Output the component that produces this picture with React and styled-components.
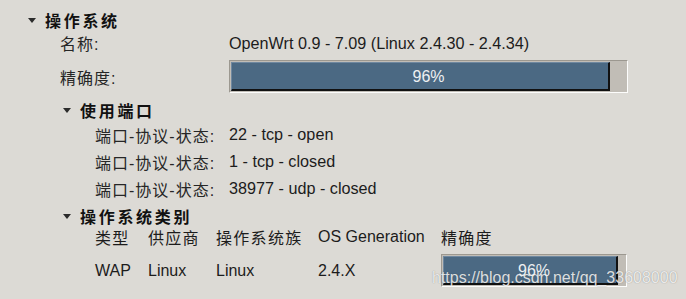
import React from 'react';
import styled, { createGlobalStyle } from 'styled-components';

const GlobalStyle = createGlobalStyle`
  html, body {
    margin: 0;
    padding: 0;
    background: #dcdad5;
  }
  body {
    font-family: "Liberation Sans", "Noto Sans CJK SC", sans-serif;
    font-size: 16px;
    color: #1c1c1c;
  }
`;

const Page = styled.div`
  position: relative;
  width: 686px;
  height: 299px;
  overflow: hidden;
  box-sizing: border-box;
  padding: 9px 0 0 25px;
`;

const Expander = styled.div`
  display: flex;
  align-items: center;
  height: 22px;
  margin-left: 3px;
  margin-top: ${p => p.$top || 0}px;
  font-weight: bold;
  letter-spacing: 2.7px;
  color: #111;
`;

const Arrow = styled.span`
  width: 0;
  height: 0;
  border-left: 4px solid transparent;
  border-right: 4px solid transparent;
  border-top: 5px solid #2b2b2b;
  margin-right: 9px;
`;

const Body = styled.div`
  padding-left: 35px;
`;

const InfoGrid = styled.div`
  display: grid;
  grid-template-columns: ${p => p.$label}px auto;
  grid-auto-rows: ${p => p.$row}px;
  align-items: center;
  margin-top: ${p => p.$top || 0}px;
`;

const Label = styled.div`
  color: #262626;
  letter-spacing: 1px;
`;

const Value = styled.div`
  color: #1c1c1c;
  font-size: 16.2px;
  white-space: nowrap;
`;

const Table = styled.div`
  display: grid;
  grid-template-columns: 53px 68px 102px 123px 186px;
  grid-template-rows: 20px 33px;
  row-gap: 7px;
  align-items: center;
`;

const Cell = styled.div`
  white-space: nowrap;
  letter-spacing: ${p => (p.$cjk ? 1.3 : 0)}px;
`;

const Trough = styled.div`
  display: grid;
  width: ${p => p.$width}px;
  height: 33px;
  box-sizing: border-box;
  padding: 1px;
  border: 1px solid;
  border-color: #9c9890 #fdfdfc #fdfdfc #9c9890;
  background: #c1bdb6;
`;

const Fill = styled.div`
  grid-area: 1 / 1;
  justify-self: start;
  box-sizing: border-box;
  height: 100%;
  background: #4b6983;
  border-top: 1px solid #6f88a0;
  border-left: 1px solid #6f88a0;
  border-right: 2px solid #111;
  border-bottom: 2px solid #111;
`;

const BarText = styled.div`
  grid-area: 1 / 1;
  justify-self: center;
  align-self: center;
  color: #eef0f2;
  font-size: 16px;
  z-index: 1;
`;

const Watermark = styled.div`
  position: absolute;
  left: 432px;
  top: 269px;
  font-family: "Liberation Sans", sans-serif;
  font-size: 16px;
  color: rgba(255, 255, 255, 0.82);
  text-shadow: 0 0 1px rgba(60, 60, 60, 0.55);
  white-space: nowrap;
`;

function Progress({ width, value }) {
  return (
    <Trough $width={width}>
      <Fill style={{ width: `${value}%` }} />
      <BarText>{value}%</BarText>
    </Trough>
  );
}

function Section({ title, top, children }) {
  return (
    <>
      <Expander $top={top}>
        <Arrow />
        {title}
      </Expander>
      <Body>{children}</Body>
    </>
  );
}

const ports = ['22 - tcp - open', '1 - tcp - closed', '38977 - udp - closed'];

export default function App() {
  return (
    <>
      <GlobalStyle />
      <Page>
        <Section title="操作系统">
          <InfoGrid $label={169} $row={22} $top={1}>
            <Label>名称:</Label>
            <Value>OpenWrt 0.9 - 7.09 (Linux 2.4.30 - 2.4.34)</Value>
          </InfoGrid>
          <InfoGrid $label={169} $row={33} $top={6}>
            <Label>精确度:</Label>
            <Progress width={399} value={96} />
          </InfoGrid>

          <Section title="使用端口" top={6}>
            <InfoGrid $label={134} $row={27}>
              {ports.map(p => (
                <React.Fragment key={p}>
                  <Label>端口-协议-状态:</Label>
                  <Value>{p}</Value>
                </React.Fragment>
              ))}
            </InfoGrid>
          </Section>

          <Section title="操作系统类别" top={3}>
            <Table>
              <Cell $cjk>类型</Cell>
              <Cell $cjk>供应商</Cell>
              <Cell $cjk>操作系统族</Cell>
              <Cell>OS Generation</Cell>
              <Cell $cjk>精确度</Cell>
              <Cell>WAP</Cell>
              <Cell>Linux</Cell>
              <Cell>Linux</Cell>
              <Cell>2.4.X</Cell>
              <Progress width={186} value={96} />
            </Table>
          </Section>
        </Section>
        <Watermark>https://blog.csdn.net/qq_33608000</Watermark>
      </Page>
    </>
  );
}
